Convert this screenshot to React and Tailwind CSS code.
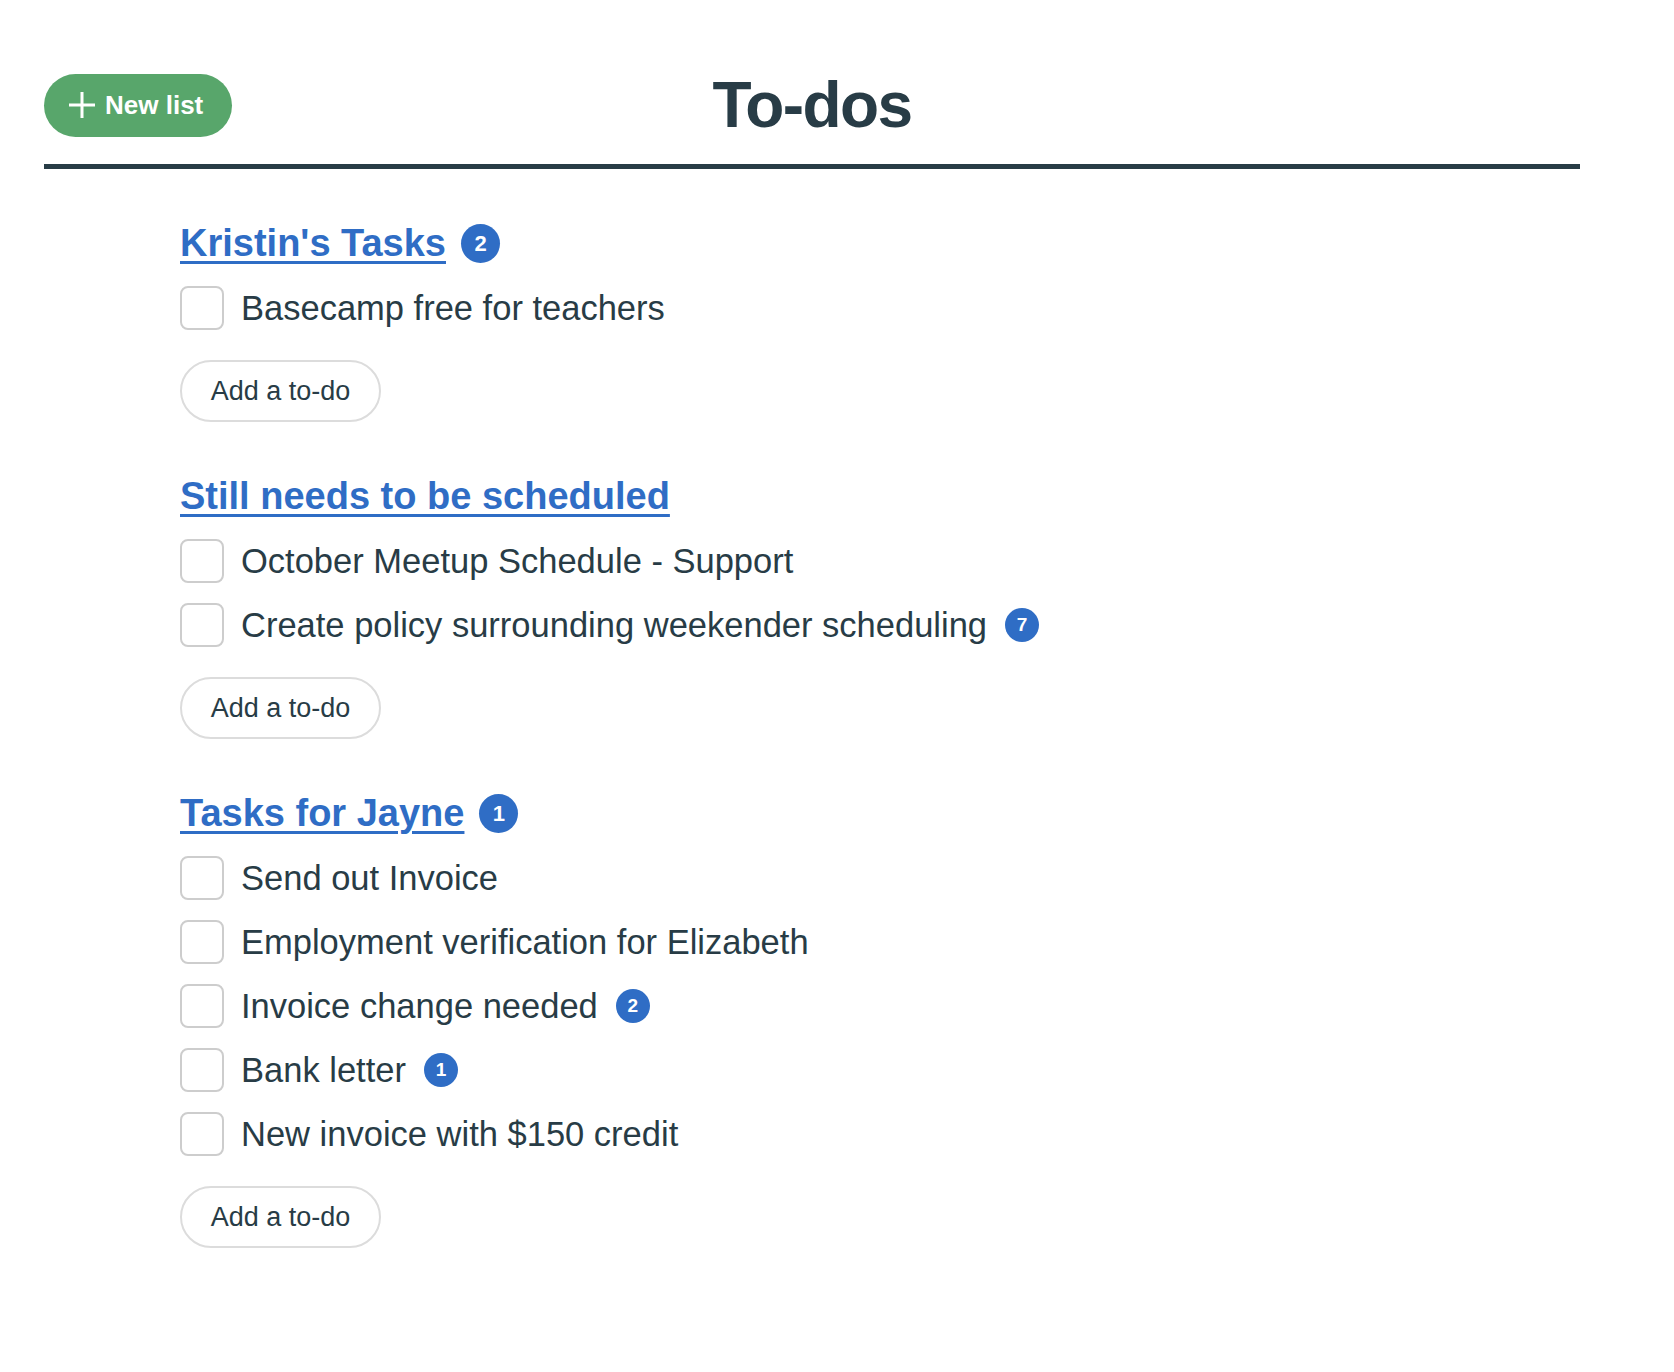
const lists = [
  {
    title: "Kristin's Tasks",
    count: 2,
    todos: [{ text: 'Basecamp free for teachers' }],
  },
  {
    title: 'Still needs to be scheduled',
    todos: [
      { text: 'October Meetup Schedule - Support' },
      { text: 'Create policy surrounding weekender scheduling', count: 7 },
    ],
  },
  {
    title: 'Tasks for Jayne',
    count: 1,
    todos: [
      { text: 'Send out Invoice' },
      { text: 'Employment verification for Elizabeth' },
      { text: 'Invoice change needed', count: 2 },
      { text: 'Bank letter', count: 1 },
      { text: 'New invoice with $150 credit' },
    ],
  },
]

function Badge({ value, large }) {
  return (
    <span
      className={
        large
          ? 'flex h-[39px] w-[39px] items-center justify-center rounded-full bg-[#2f6dc5] text-[22px] font-bold text-white'
          : 'flex h-[34px] w-[34px] items-center justify-center rounded-full bg-[#2f6dc5] text-[19px] font-bold text-white'
      }
    >
      {value}
    </span>
  )
}

function TodoList({ list }) {
  return (
    <section className="mb-[50px]">
      <div className="flex h-[48px] items-center gap-[15px]">
        <a
          href="#"
          className="text-[38px] font-bold leading-none text-[#2f6dc5] underline decoration-[3px] underline-offset-[5px]"
        >
          {list.title}
        </a>
        {list.count && <Badge value={list.count} large />}
      </div>

      <ul className="mt-[19px] flex flex-col gap-[20px]">
        {list.todos.map((todo) => (
          <li key={todo.text} className="flex h-[44px] items-center">
            <span className="h-[44px] w-[44px] shrink-0 rounded-[8px] border-2 border-[#cdcdcd] bg-white" />
            <span className="ml-[17px] text-[34.5px] leading-none">{todo.text}</span>
            {todo.count && (
              <span className="ml-[18px]">
                <Badge value={todo.count} />
              </span>
            )}
          </li>
        ))}
      </ul>

      <button
        type="button"
        className="mt-[30px] flex h-[62px] w-[201px] items-center justify-center rounded-full border-2 border-[#dcdcdc] bg-white text-[27px] text-[#283c46]"
      >
        Add a to-do
      </button>
    </section>
  )
}

export default function App() {
  return (
    <div className="min-h-screen bg-white font-['Liberation_Sans',Arial,sans-serif] text-[#283c46]">
      <div className="ml-[44px] w-[1536px] pt-[73px]">
        <header className="grid h-[63px] grid-cols-[1fr_auto_1fr] items-center">
          <div>
            <button
              type="button"
              className="flex h-[63px] items-center gap-[9px] rounded-full bg-[#58a66b] pl-[24px] pr-[29px] text-[26px] font-semibold text-white"
            >
              <svg width="28" height="28" viewBox="0 0 28 28" fill="none">
                <path d="M14 1v26M1 14h26" stroke="white" strokeWidth="3" />
              </svg>
              New list
            </button>
          </div>
          <h1 className="text-[64px] font-bold leading-none tracking-[-0.025em]">To-dos</h1>
          <div />
        </header>

        <div className="mt-[28px] h-[5px] bg-[#283c46]" />

        <main className="pl-[136px] pt-[50px]">
          {lists.map((list) => (
            <TodoList key={list.title} list={list} />
          ))}
        </main>
      </div>
    </div>
  )
}
